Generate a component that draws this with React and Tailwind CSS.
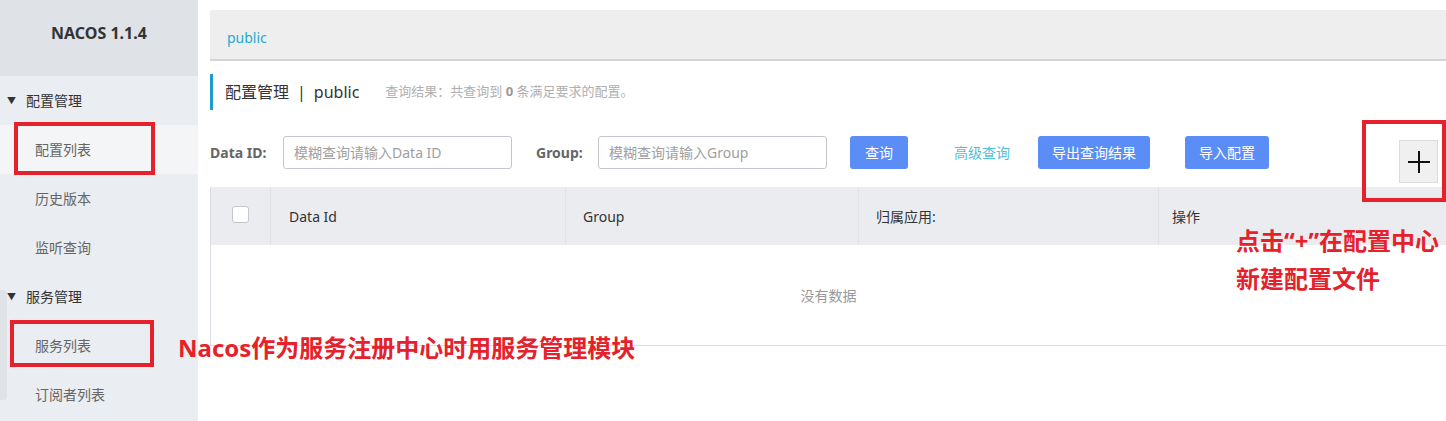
import React from 'react';

const font = { fontFamily: '"Noto Sans", "Noto Sans CJK SC", sans-serif' };

const SideGroup = ({ label }) => (
  <div className="h-[49px] flex items-center pl-[7px] text-[14px] text-[#333]">
    <span className="text-[9px] mr-[10px] text-[#333]">▼</span>
    {label}
  </div>
);

const SideItem = ({ label, active }) => (
  <div className={`h-[49px] flex items-center pl-[35px] text-[14px] text-[#666] ${active ? 'bg-[#f4f5f7]' : ''}`}>
    {label}
  </div>
);

const Btn = ({ children, className }) => (
  <button className={`h-[33px] rounded-[3px] bg-[#5a8df6] text-white text-[14px] whitespace-nowrap ${className || ''}`}>
    {children}
  </button>
);

export default function App() {
  return (
    <div className="relative w-[1446px] h-[421px] overflow-hidden bg-white flex" style={font}>
      {/* Sidebar */}
      <div className="w-[198px] shrink-0 bg-[#eaedf1] h-full">
        <div className="h-[76px] bg-[#dfe2e6] flex items-center justify-center pb-[10px] text-[16px] font-bold text-[#333]">
          NACOS 1.1.4
        </div>
        <SideGroup label="配置管理" />
        <SideItem label="配置列表" active />
        <SideItem label="历史版本" />
        <SideItem label="监听查询" />
        <SideGroup label="服务管理" />
        <SideItem label="服务列表" />
        <SideItem label="订阅者列表" />
      </div>

      {/* Main */}
      <div className="flex-1 pl-[12px] pt-[10px]">
        <div className="h-[51px] bg-[#eeeeee] border-b-2 border-[#d4d4d4] flex items-center pl-[17px] pt-[6px] text-[14px] text-[#2aa9cf]">
          public
        </div>

        <div className="mt-[13px] h-[36px] border-l-[3px] border-[#1b9bd0] flex items-center pl-[12px]">
          <span className="text-[16px] text-[#333]">配置管理</span>
          <span className="text-[16px] text-[#333] mx-[8px]">|</span>
          <span className="text-[16px] text-[#333]">public</span>
          <span className="ml-[26px] text-[13px] text-[#b0b0b0]">
            查询结果：共查询到 <b className="text-[#999]">0</b> 条满足要求的配置。
          </span>
        </div>

        <div className="mt-[26px] flex items-start">
          <div className="flex items-center h-[33px]">
            <span className="text-[14px] font-bold text-[#666] w-[73px]">Data ID:</span>
            <div className="w-[229px] h-[33px] border border-[#c4c6cf] rounded-[3px] flex items-center px-[10px] text-[14px] text-[#a0a0a0]">
              模糊查询请输入Data ID
            </div>
            <span className="ml-[24px] text-[14px] font-bold text-[#666] w-[62px]">Group:</span>
            <div className="w-[229px] h-[33px] border border-[#c4c6cf] rounded-[3px] flex items-center px-[10px] text-[14px] text-[#a0a0a0]">
              模糊查询请输入Group
            </div>
            <Btn className="ml-[23px] w-[58px]">查询</Btn>
            <span className="ml-[46px] text-[14px] text-[#4ec0d8]">高级查询</span>
            <Btn className="ml-[28px] w-[112px]">导出查询结果</Btn>
            <Btn className="ml-[35px] w-[84px]">导入配置</Btn>
          </div>
          <div className="ml-auto mr-[8px] mt-[4px] w-[39px] h-[43px] bg-[#f0f0f0] border border-[#dcdcdc] flex items-center justify-center">
            <svg width="24" height="24" viewBox="0 0 24 24">
              <path d="M12 1v22M1 12h22" stroke="#111" strokeWidth="2" />
            </svg>
          </div>
        </div>

        {/* Table */}
        <div className="mt-[4px] border-l border-b border-[#dcdee3]">
          <div className="h-[58px] bg-[#ebecf0] flex text-[14px] text-[#333]">
            <div className="w-[60px] flex items-center justify-center border-r border-[#e0e2e6]">
              <div className="w-[17px] h-[17px] bg-white border border-[#c4c6cf] rounded-[3px] -mt-[4px]" />
            </div>
            <div className="w-[295px] flex items-center pl-[18px] border-r border-[#e0e2e6]">Data Id</div>
            <div className="w-[293px] flex items-center pl-[17px] border-r border-[#e0e2e6]">Group</div>
            <div className="w-[300px] flex items-center pl-[17px] border-r border-[#e0e2e6]">归属应用:</div>
            <div className="flex-1 flex items-center pl-[13px]">操作</div>
          </div>
          <div className="h-[100px] flex items-center justify-center text-[14px] text-[#999]">
            没有数据
          </div>
        </div>
      </div>

      {/* Sidebar collapse handle */}
      <div className="absolute left-0 top-[290px] w-[7px] h-[110px] bg-[#dfe2e6] rounded-r-[4px]" />

      {/* Annotations */}
      <div className="absolute left-[14px] top-[122px] w-[141px] h-[53px] border-4 border-[#e5212b]" />
      <div className="absolute left-[10px] top-[320px] w-[144px] h-[47px] border-4 border-[#e5212b]" />
      <div className="absolute left-[1362px] top-[120px] w-[84px] h-[82px] border-4 border-[#e5212b]" />
      <div className="absolute left-[178px] top-[332px] text-[24px] leading-[32px] font-bold text-[#e5212b] whitespace-nowrap">
        Nacos作为服务注册中心时用服务管理模块
      </div>
      <div className="absolute left-[1236px] top-[222px] text-[24px] leading-[38px] font-bold text-[#e5212b] whitespace-nowrap">
        <div>点击“+”在配置中心</div>
        <div>新建配置文件</div>
      </div>
    </div>
  );
}
